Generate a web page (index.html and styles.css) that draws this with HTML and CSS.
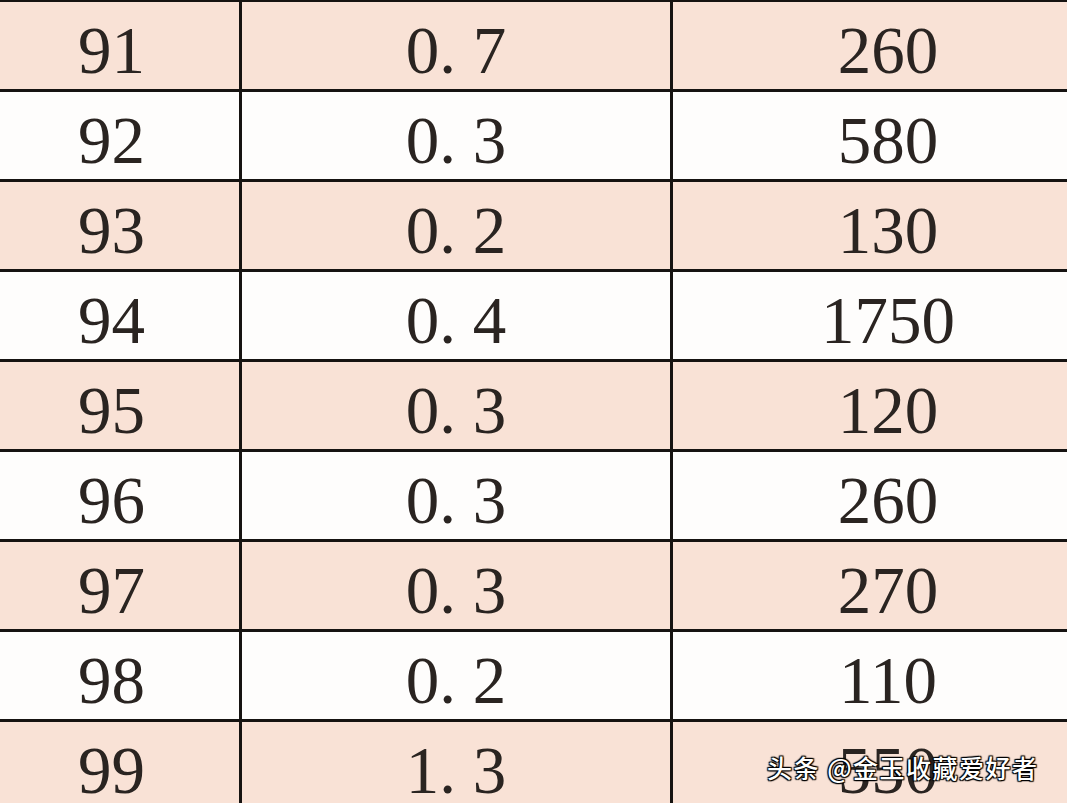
FILE: index.html
```html
<!DOCTYPE html>
<html lang="zh">
<head>
<meta charset="utf-8">
<link rel="stylesheet" href="styles.css">
</head>
<body>
<div class="page">
  <div class="table">
    <div class="row peach"><div class="cell c1">91</div><div class="cell">0. 7</div><div class="cell">260</div></div>
    <div class="row"><div class="cell c1">92</div><div class="cell">0. 3</div><div class="cell">580</div></div>
    <div class="row peach"><div class="cell c1">93</div><div class="cell">0. 2</div><div class="cell">130</div></div>
    <div class="row"><div class="cell c1">94</div><div class="cell">0. 4</div><div class="cell">1750</div></div>
    <div class="row peach"><div class="cell c1">95</div><div class="cell">0. 3</div><div class="cell">120</div></div>
    <div class="row"><div class="cell c1">96</div><div class="cell">0. 3</div><div class="cell">260</div></div>
    <div class="row peach"><div class="cell c1">97</div><div class="cell">0. 3</div><div class="cell">270</div></div>
    <div class="row"><div class="cell c1">98</div><div class="cell">0. 2</div><div class="cell">110</div></div>
    <div class="row peach"><div class="cell c1">99</div><div class="cell">1. 3</div><div class="cell">550</div></div>
  </div>
  <div class="watermark">头条 @金玉收藏爱好者</div>
</div>
</body>
</html>
```
FILE: styles.css
```css
html, body {
  margin: 0;
  padding: 0;
  background: #fefdfc;
  overflow: hidden;
}
.page {
  position: relative;
  width: 1067px;
  height: 803px;
  overflow: hidden;
}
.table {
  margin-top: -1px;
  width: 1103px;
  font-family: "Liberation Serif", "Noto Sans CJK SC", serif;
  font-size: 67px;
  color: #2a2421;
}
.row {
  display: grid;
  grid-template-columns: 239px 431px 433px;
  height: 90px;
  box-sizing: border-box;
  border-top: 3px solid #161311;
  background: #fefdfc;
}
.row.peach {
  background: #f9e2d6;
}
.cell {
  box-sizing: border-box;
  border-left: 3px solid #161311;
  text-align: center;
  padding-top: 10px;
  line-height: 77px;
  white-space: pre;
}
.cell.c1 {
  border-left: none;
  padding-right: 16px;
}
.watermark {
  position: absolute;
  left: 767px;
  top: 751px;
  font-family: "Noto Sans CJK SC", sans-serif;
  font-size: 25px;
  font-weight: 500;
  line-height: 32px;
  letter-spacing: 1.5px;
  color: #ffffff;
  text-shadow: 0 0 2px #000, 1px 1px 1px #000, -1px -1px 1px #000, 1px -1px 1px #000, -1px 1px 1px #000;
}
```
